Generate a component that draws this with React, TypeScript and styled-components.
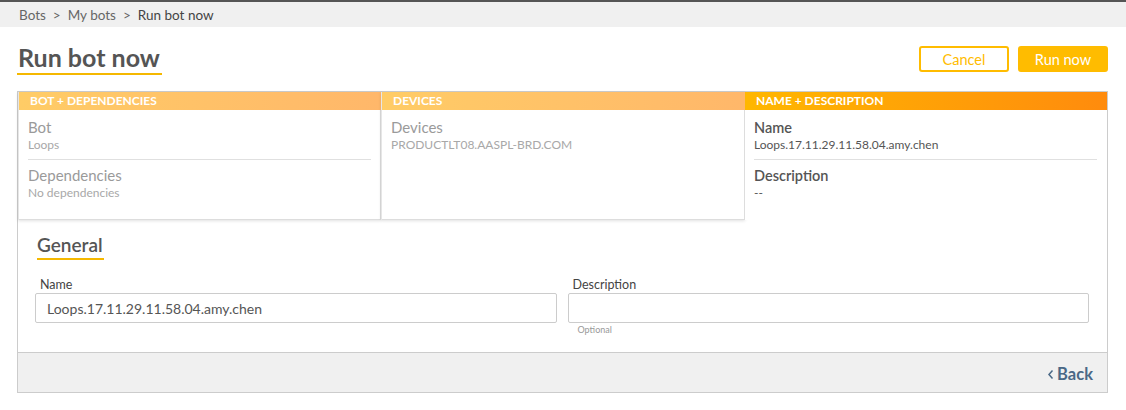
import React from 'react';
import styled, { createGlobalStyle } from 'styled-components';

const GlobalStyle = createGlobalStyle`
    body {
        margin: 0;
        background: #ffffff;
        font-family: Lato, 'Open Sans', sans-serif;
        color: #555555;
    }
`;

const Breadcrumbs = styled.div`
    display: flex;
    align-items: center;
    height: 25px;
    padding-left: 19px;
    border-top: 2px solid #555555;
    background: #f0f0f0;
    font-size: 13.5px;
    color: #5a5a5a;
`;

const Crumb = styled.span<{ $current?: boolean }>`
    color: ${p => (p.$current ? '#444444' : '#666666')};
`;

const Separator = styled.span`
    padding: 0 7px;
    color: #666666;
`;

const Header = styled.div`
    display: flex;
    align-items: flex-start;
    justify-content: space-between;
    padding: 16px 18px 0 17px;
`;

const Title = styled.h1`
    margin: 0;
    padding: 0 2px 2px 1px;
    font-size: 25px;
    font-weight: 700;
    line-height: 28px;
    color: #555555;
    border-bottom: 2px solid #f5b800;
`;

const Actions = styled.div`
    display: flex;
    gap: 9px;
    padding-top: 3px;
`;

const ActionButton = styled.button<{ $primary?: boolean }>`
    width: 90px;
    height: 26px;
    border: 2px solid #ffbc00;
    border-radius: 3px;
    background: ${p => (p.$primary ? '#ffbc00' : '#ffffff')};
    color: ${p => (p.$primary ? '#ffffff' : '#ffbc00')};
    font-family: Lato, sans-serif;
    font-size: 14.5px;
    cursor: pointer;
`;

const Panel = styled.div`
    margin: 16px 18px 0 17px;
    border: 1px solid #cccccc;
`;

const Steps = styled.div`
    display: grid;
    grid-template-columns: 363px 364px 1fr;
    height: 128px;
`;

const Step = styled.div<{ $active?: boolean }>`
    display: flex;
    flex-direction: column;
    background: #ffffff;
    box-shadow: ${p =>
        p.$active ? 'none' : 'inset -1px -1px 0 #dddddd, 0 1px 3px rgba(0, 0, 0, 0.12)'};
    border-left: ${p => (p.$active ? 'none' : '1px solid #e6e6e6')};
`;

const StepTitle = styled.div<{ $active?: boolean }>`
    height: 18px;
    padding-left: 11px;
    font-size: 12px;
    font-weight: 700;
    line-height: 18px;
    color: #ffffff;
    text-transform: uppercase;
    background: ${p =>
        p.$active
            ? 'linear-gradient(to right, #ffb700, #ff8b0d)'
            : 'linear-gradient(to right, #ffcc66, #ffb76a)'};
`;

const StepBody = styled.div`
    padding: 7px 10px 0 9px;
`;

const Field = styled.div<{ $divided?: boolean }>`
    padding: 1px 0 6px 0;
    margin-bottom: 5px;
    border-bottom: ${p => (p.$divided ? '1px solid #e0e0e0' : 'none')};
`;

const FieldLabel = styled.div<{ $active?: boolean }>`
    font-size: ${p => (p.$active ? '14.5px' : '15px')};
    line-height: 19px;
    color: ${p => (p.$active ? '#555555' : '#9a9a9a')};
    font-weight: ${p => (p.$active ? 600 : 400)};
`;

const FieldValue = styled.div<{ $active?: boolean }>`
    font-size: 12px;
    line-height: 16px;
    color: ${p => (p.$active ? '#555555' : '#a8a8a8')};
`;

const Section = styled.div`
    padding: 14px 18px 17px 17px;
`;

const SectionTitle = styled.h2`
    display: inline-block;
    margin: 0 0 18px 2px;
    padding: 0 1px 2px 0;
    font-size: 19px;
    font-weight: 600;
    line-height: 22px;
    color: #555555;
    border-bottom: 2px solid #f5b800;
`;

const FormRow = styled.div`
    display: grid;
    grid-template-columns: 1fr 1fr;
    gap: 11px;
`;

const FormField = styled.div`
    display: flex;
    flex-direction: column;
`;

const Label = styled.label`
    padding-left: 5px;
    margin-bottom: 1px;
    font-size: 12.5px;
    line-height: 14px;
    color: #444444;
`;

const Input = styled.input`
    box-sizing: border-box;
    height: 30px;
    padding: 0 11px;
    border: 1px solid #cccccc;
    border-radius: 2px;
    font-family: Lato, sans-serif;
    font-size: 14px;
    color: #555555;
    outline: none;
`;

const Hint = styled.div`
    padding: 1px 0 0 10px;
    font-size: 9px;
    line-height: 11px;
    color: #999999;
`;

const Footer = styled.div`
    display: flex;
    align-items: center;
    justify-content: flex-end;
    height: 39px;
    padding-right: 14px;
    border-top: 1px solid #cccccc;
    background: #f0f0f0;
`;

const BackLink = styled.a`
    display: flex;
    align-items: center;
    gap: 3px;
    padding-top: 3px;
    font-size: 16.5px;
    font-weight: 700;
    color: #4a6886;
    text-decoration: none;
    cursor: pointer;
`;

const steps = [
    {
        title: 'Bot + dependencies',
        fields: [
            { label: 'Bot', value: 'Loops' },
            { label: 'Dependencies', value: 'No dependencies' },
        ],
    },
    {
        title: 'Devices',
        fields: [{ label: 'Devices', value: 'PRODUCTLT08.AASPL-BRD.COM' }],
    },
    {
        title: 'Name + description',
        active: true,
        fields: [
            { label: 'Name', value: 'Loops.17.11.29.11.58.04.amy.chen' },
            { label: 'Description', value: '--' },
        ],
    },
];

const App = () => {
    return (
        <>
            <GlobalStyle />
            <Breadcrumbs>
                <Crumb>Bots</Crumb>
                <Separator>&gt;</Separator>
                <Crumb>My bots</Crumb>
                <Separator>&gt;</Separator>
                <Crumb $current>Run bot now</Crumb>
            </Breadcrumbs>
            <Header>
                <Title>Run bot now</Title>
                <Actions>
                    <ActionButton>Cancel</ActionButton>
                    <ActionButton $primary>Run now</ActionButton>
                </Actions>
            </Header>
            <Panel>
                <Steps>
                    {steps.map(step => (
                        <Step key={step.title} $active={step.active}>
                            <StepTitle $active={step.active}>{step.title}</StepTitle>
                            <StepBody>
                                {step.fields.map((field, i) => (
                                    <Field
                                        key={field.label}
                                        $divided={i < step.fields.length - 1}
                                    >
                                        <FieldLabel $active={step.active}>{field.label}</FieldLabel>
                                        <FieldValue $active={step.active}>{field.value}</FieldValue>
                                    </Field>
                                ))}
                            </StepBody>
                        </Step>
                    ))}
                </Steps>
                <Section>
                    <SectionTitle>General</SectionTitle>
                    <FormRow>
                        <FormField>
                            <Label>Name</Label>
                            <Input defaultValue="Loops.17.11.29.11.58.04.amy.chen" />
                        </FormField>
                        <FormField>
                            <Label>Description</Label>
                            <Input />
                            <Hint>Optional</Hint>
                        </FormField>
                    </FormRow>
                </Section>
                <Footer>
                    <BackLink>
                        <svg width="7" height="11" viewBox="0 0 7 11">
                            <path d="M5.5 1.5 L2 5.5 L5.5 9.5" fill="none" stroke="#4a6886" strokeWidth="1.5" />
                        </svg>
                        Back
                    </BackLink>
                </Footer>
            </Panel>
        </>
    );
};

export default App;
